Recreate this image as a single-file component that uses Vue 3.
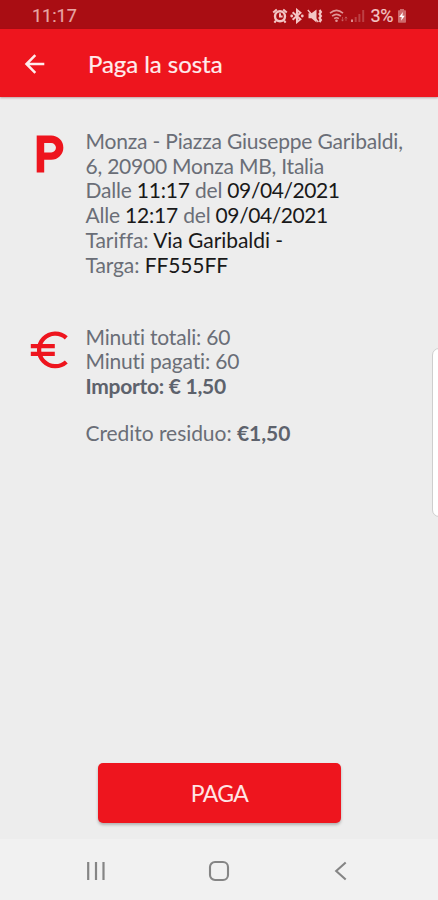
<script setup>
const parking = {
  address: ['Monza - Piazza Giuseppe Garibaldi,', '6, 20900 Monza MB, Italia'],
  from: '11:17',
  to: '12:17',
  date: '09/04/2021',
  rate: 'Via Garibaldi -',
  plate: 'FF555FF',
}
const payment = { total: 60, paid: 60, amount: '€ 1,50', credit: '€1,50' }
</script>

<template>
  <div class="screen">
    <div class="status">
      <span class="clock">11:17</span>
      <div class="indicators">
        <svg class="alarm" width="16" height="16" viewBox="0 0 16 16">
          <circle cx="8" cy="8.3" r="5" fill="none" stroke="currentColor" stroke-width="2.4" />
          <path d="M1.200 4.600 4.800 1.400M14.800 4.600 11.200 1.400M3.900 12.600 2.400 14.600M12.100 12.600l1.500 2M8 5.300v3.200h2.600" fill="none" stroke="currentColor" stroke-width="2" />
        </svg>
        <svg class="bluetooth" width="14" height="16" viewBox="0 0 14 16">
          <path d="m2.600 4.300 7.800 6.900L7 14V2l3.400 2.800-7.800 6.900" fill="none" stroke="currentColor" stroke-width="2" />
          <circle cx="1.700" cy="8" r="1.400" fill="currentColor" /><circle cx="12.300" cy="8" r="1.400" fill="currentColor" />
        </svg>
        <svg class="mute" width="17" height="16" viewBox="0 0 17 16">
          <path d="M1.500 5.300h3L9.500 1.500v13l-5-4.300h-3z" fill="currentColor" />
          <path d="m.8 2 10.500 12" stroke="currentColor" stroke-width="1.300" />
          <path d="m12.500 2 1.400 2-1.400 2 1.400 2-1.400 2 1.400 2-1.400 2" fill="none" stroke="currentColor" stroke-width="2.200" />
        </svg>
        <svg class="wifi" width="19" height="16" viewBox="0 0 19 16">
          <path d="M1 5.200q6.500-5.500 13 0M3.100 8.100q4.400-3.600 8.800 0M5.200 10.700q2.300-1.800 4.600 0" fill="none" stroke="currentColor" stroke-width="1.600" />
          <circle cx="7.500" cy="12.800" r="1.300" fill="currentColor" />
          <path d="M13.500 9v4m-1.200-1.500 1.200 1.700 1.200-1.700M17 13V9m-1.200 1.500L17 8.800l1.200 1.700" fill="none" stroke="currentColor" stroke-width=".8" opacity=".5" />
        </svg>
        <svg class="signal" width="15" height="16" viewBox="0 0 15 16">
          <path d="M1 11.500h2V14H1z" fill="currentColor" />
          <path d="M4.700 9h2v5h-2zM8.400 6h2v8h-2zM12.200 2h2v12h-2z" fill="currentColor" opacity=".4" />
        </svg>
        <span class="percent">3%</span>
        <svg class="battery" width="10" height="16" viewBox="0 0 10 16">
          <path d="M3 1h4v1.300h1.200q.8 0 .8.800v10.800q0 .8-.8.800H1.800q-.8 0-.8-.8V3.100q0-.8.8-.8H3z" fill="currentColor" opacity=".5" />
          <path d="M5.900 4.100 2.200 9h2.500l-.6 3.700L7.800 7.700H5.400z" fill="#fff" />
        </svg>
      </div>
    </div>

    <header class="bar">
      <svg class="back" width="22" height="22" viewBox="0 0 22 22">
        <path d="M20.300 11H2.500M11.300 2.200 2.500 11l8.800 8.800" fill="none" stroke="currentColor" stroke-width="2.500" />
      </svg>
      <h1 class="title">Paga la sosta</h1>
    </header>

    <main class="content">
      <section class="row parking">
        <svg class="icon" width="50" height="56" viewBox="0 0 50 56">
          <path fill-rule="evenodd" d="M12.700 7.500H27.200a12 12 0 0 1 0 24.300H20.200v12.700H12.700zM20.200 15v9.500h7a4.750 4.750 0 0 0 0-9.500z" fill="currentColor" />
        </svg>
        <div class="lines">
          <div class="address">{{ parking.address[0] }}</div>
          <div class="address second">{{ parking.address[1] }}</div>
          <div class="from">Dalle <span class="dark">{{ parking.from }}</span> del <span class="dark date">{{ parking.date }}</span></div>
          <div class="to">Alle <span class="dark">{{ parking.to }}</span> del <span class="dark date">{{ parking.date }}</span></div>
          <div class="rate">Tariffa: <span class="dark">{{ parking.rate }}</span></div>
          <div class="plate">Targa: <span class="dark">{{ parking.plate }}</span></div>
        </div>
      </section>

      <section class="row payment">
        <svg class="icon" width="50" height="56" viewBox="0 0 50 56">
          <path d="M42.300 11.800A16.300 16.300 0 1 0 42.300 36M6.800 20.100h24M6.800 27.900h24" fill="none" stroke="currentColor" stroke-width="4.300" />
        </svg>
        <div class="lines">
          <div class="total">Minuti totali: {{ payment.total }}</div>
          <div class="paid">Minuti pagati: {{ payment.paid }}</div>
          <div class="amount">Importo: {{ payment.amount }}</div>
          <div class="credit">Credito residuo: <b>{{ payment.credit }}</b></div>
        </div>
      </section>

      <button class="pay">PAGA</button>
    </main>

    <nav class="nav">
      <svg width="20" height="20" viewBox="0 0 20 20"><path d="M2.200 1v18M10 1v18M17.500 1v18" stroke="currentColor" stroke-width="2.200" /></svg>
      <svg width="22" height="22" viewBox="0 0 22 22"><rect x="2" y="2" width="18" height="18" rx="5" fill="none" stroke="currentColor" stroke-width="2.100" /></svg>
      <svg width="20" height="20" viewBox="0 0 20 20"><path d="M14.700 1.500 5.200 10l9.500 8.500" fill="none" stroke="currentColor" stroke-width="2.100" /></svg>
    </nav>

    <div class="edge-handle"></div>
  </div>
</template>

<style>
body { margin: 0; background: #eee; }
</style>

<style scoped>
.screen {
  position: relative;
  display: flex;
  flex-direction: column;
  width: 438px;
  height: 900px;
  overflow: hidden;
  background: #ededed;
  font-family: Lato, sans-serif;
}
.status {
  display: flex;
  justify-content: space-between;
  align-items: center;
  box-sizing: border-box;
  height: 29px;
  padding: 2px 31px 0 32px;
  background: #a90d13;
  color: #f3c5c4;
  font-family: Roboto, sans-serif;
}
.clock { font-size: 18px; line-height: 20px; color: #e7a5a4; -webkit-text-stroke: .2px; }
.indicators { display: flex; align-items: center; }
.alarm { margin-right: -1px; }
.bluetooth { margin-left: 3px; }
.mute { margin-left: 3px; }
.wifi { margin-left: 5px; opacity: .75; }
.signal { margin-left: 2px; opacity: .7; }
.percent { margin-left: 6px; font-size: 18px; line-height: 20px; letter-spacing: -.4px; -webkit-text-stroke: .2px; }
.battery { margin-left: 4px; }
.bar {
  display: flex;
  align-items: center;
  box-sizing: border-box;
  height: 68px;
  padding: 2px 0 0 24px;
  flex: none;
  background: #ee151e;
  color: #ffecec;
  box-shadow: 0 1px 2px rgba(100, 20, 20, .35);
}
.title { margin: 0 0 0 42px; font-size: 24px; line-height: 30px; font-weight: 400; letter-spacing: -.05px; -webkit-text-stroke: .2px; }
.content { display: flex; flex: 1; flex-direction: column; align-items: stretch; }
.row { display: flex; align-items: flex-start; color: #6a6e77; }
.parking { padding: 32px 0 0 24px; }
.payment { padding: 47.500px 0 0 24px; }
.icon { flex: none; width: 50px; height: 56px; color: #ee151e; }
.parking .icon { margin-top: -1px; }
.payment .icon { margin-top: 1px; }
.lines { margin-left: 11.500px; font-size: 21px; line-height: 24.700px; letter-spacing: -.18px; white-space: nowrap; }
.dark { color: #191919; }
.second { letter-spacing: -.22px; }
.from, .to { letter-spacing: -.2px; }
.date { letter-spacing: -.42px; }
.rate { letter-spacing: -.05px; }
.plate { letter-spacing: -.1px; }
.amount { font-weight: 700; color: #5d626c; letter-spacing: -.28px; }
.credit { margin-top: 22.500px; letter-spacing: -.05px; }
.credit b { color: #5d626c; }
.pay {
  width: 243px;
  height: 60px;
  margin: auto auto 16px 98px;
  padding: 0;
  border: 0;
  border-radius: 5px;
  background: #ee151e;
  color: #ffe5e5;
  font: 400 23px/61px Lato, sans-serif;
  letter-spacing: -.6px;
  box-shadow: 0 2px 3px rgba(0, 0, 0, .25);
}
.nav {
  display: flex;
  flex: none;
  align-items: center;
  justify-content: space-between;
  box-sizing: border-box;
  height: 61px;
  padding: 3px 87px 0 86px;
  background: #f1f1f1;
  color: #858585;
}
.edge-handle {
  position: absolute;
  top: 348px;
  left: 432px;
  box-sizing: border-box;
  width: 14px;
  height: 169px;
  border: 1.500px solid #cecece;
  border-radius: 7px;
  background: #fff;
}
</style>
